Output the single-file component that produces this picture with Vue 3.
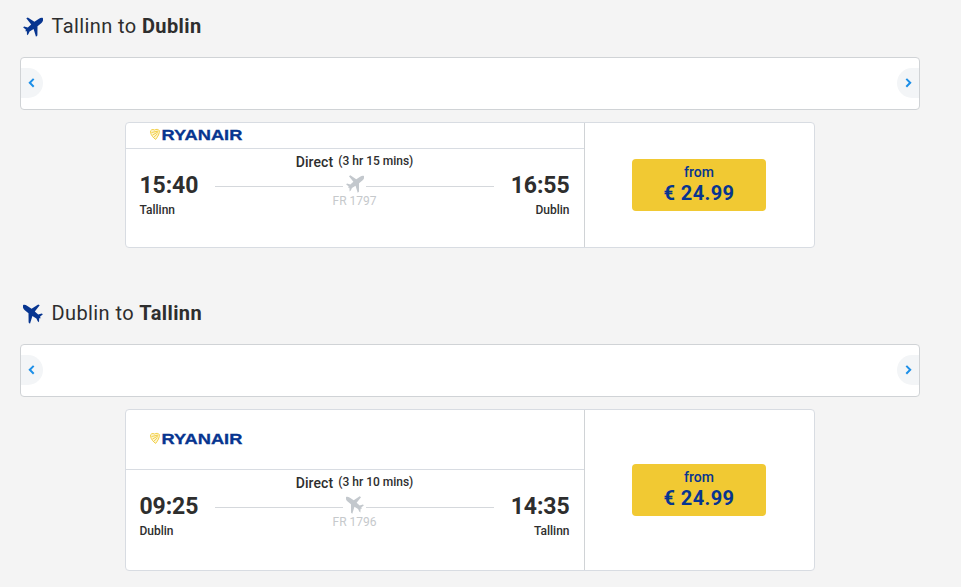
<template>
  <div class="page">
    <section v-for="trip in trips" :key="trip.number" class="trip">
      <h2 class="heading">
        <svg class="heading-plane" :class="{ back: trip.back }" viewBox="0 0 20 20">
          <path :d="plane" />
        </svg>
        <span>{{ trip.from }} to <b>{{ trip.to }}</b></span>
      </h2>

      <div class="dates">
        <button class="arrow prev">
          <svg viewBox="0 0 7 10"><path d="M5.7.9 1.8 4.8l3.9 3.9" /></svg>
        </button>
        <button class="arrow next">
          <svg viewBox="0 0 7 10"><path d="M1.3.9 5.2 4.8 1.3 8.7" /></svg>
        </button>
      </div>

      <div class="card" :class="{ tall: trip.back }">
        <div class="details">
          <div class="airline">
            <svg class="logo" viewBox="0 0 94 14">
              <g class="harp">
                <path d="M1.5 4.2C1.3 1.6 3.500 1 5.500 2c1.600-1 4.200-.8 4.800.6.4 3-1.400 5.800-3.600 8.800C4.300 9.800 2.100 7.400 1.500 4.200Z" />
                <path d="M2.500 4.500 9.300 3M3.500 7l5.400-3M5 9.200l3.500-3.600" />
              </g>
              <text x="12.6" y="12" textLength="80.8" lengthAdjust="spacingAndGlyphs">RYANAIR</text>
            </svg>
          </div>
          <div class="flight">
            <div class="stop">
              <div class="time">{{ trip.departs }}</div>
              <div class="city">{{ trip.from }}</div>
            </div>
            <div class="route">
              <div class="duration"><span class="direct">Direct</span><span class="length">({{ trip.duration }})</span></div>
              <div class="track">
                <i></i>
                <svg :class="{ back: trip.back }" viewBox="0 0 20 20"><path :d="plane" /></svg>
                <i></i>
              </div>
              <div class="number">{{ trip.number }}</div>
            </div>
            <div class="stop arrival">
              <div class="time">{{ trip.arrives }}</div>
              <div class="city">{{ trip.to }}</div>
            </div>
          </div>
        </div>
        <div class="fare">
          <button class="price">
            <span class="price-from">from</span>
            <span class="price-value">{{ trip.price }}</span>
          </button>
        </div>
      </div>
    </section>
  </div>
</template>

<script setup>
import { ref } from 'vue';

const plane = 'M19.9 1.2C19.2.4 17.200.9 15.600 1.900L11.400 4.800 4.800.400 3.300 1.300 8.200 7.500 4.800 10.600 1.200 9.400.100 10.300 3 12.800 2.300 14.300 3.800 14.300 4 18.200 5.300 17.300 6.600 14.400 10.600 12 13 19.700 14.400 18.600 14.500 9.300 18.200 6.200C20 4.700 20.600 2.300 19.900 1.200Z';

const trips = ref([
  {
    from: 'Tallinn',
    to: 'Dublin',
    departs: '15:40',
    arrives: '16:55',
    duration: '3 hr 15 mins',
    number: 'FR 1797',
    price: '€ 24.99',
    back: false,
  },
  {
    from: 'Dublin',
    to: 'Tallinn',
    departs: '09:25',
    arrives: '14:35',
    duration: '3 hr 10 mins',
    number: 'FR 1796',
    price: '€ 24.99',
    back: true,
  },
]);
</script>

<style>
body {
  background: #f4f4f4;
}
</style>

<style scoped>
.page {
  box-sizing: border-box;
  height: 587px;
  overflow: hidden;
  padding: 11px 41px 0 20px;
  background: #f4f4f4;
  color: #2e2e2e;
  font-family: Roboto, sans-serif;
}

.trip {
  margin-bottom: 50px;
}

.heading {
  display: flex;
  align-items: center;
  height: 30px;
  margin: 0 0 16px;
  padding-left: 3px;
  font-size: 20px;
  font-weight: 400;
  letter-spacing: 0.4px;
}

.heading b {
  font-weight: 700;
}

.heading-plane {
  width: 20px;
  height: 20px;
  margin: 2px 8.5px 0 0;
  fill: #073590;
}

.back {
  transform: scaleX(-1);
}

.dates {
  box-sizing: border-box;
  display: flex;
  justify-content: space-between;
  height: 53px;
  padding-top: 10px;
  border: 1px solid #d0d3d6;
  border-radius: 4px;
  background: #fff;
}

.arrow {
  display: flex;
  align-items: center;
  width: 22px;
  height: 30px;
  padding: 0 0 0 7px;
  border: 0;
  background: #f3f5f7;
}

.arrow svg {
  width: 7px;
  height: 10px;
  fill: none;
  stroke: #1c8fe8;
  stroke-width: 2;
}

.prev {
  border-radius: 0 15px 15px 0;
}

.next {
  padding-left: 8px;
  border-radius: 15px 0 0 15px;
}

.card {
  box-sizing: border-box;
  display: flex;
  width: 690px;
  height: 126px;
  margin: 12px 0 0 105px;
  border: 1px solid #d8dce2;
  border-radius: 4px;
  background: #fff;
}

.card.tall {
  height: 162px;
}

.details {
  width: 458px;
  border-right: 1px solid #d0d3d6;
}

.airline {
  box-sizing: border-box;
  display: flex;
  align-items: center;
  height: 26px;
  padding: 0 0 2px 23px;
  border-bottom: 1px solid #d8dce2;
}

.tall .airline {
  height: 60px;
}

.logo {
  width: 94px;
  height: 14px;
}

.logo text {
  fill: #073590;
  stroke: #073590;
  stroke-width: 0.3;
  font: bold 14.5px "Liberation Sans", sans-serif;
}

.harp {
  fill: #fdf6d8;
  stroke: #f1c933;
  stroke-width: 0.9;
}

.flight {
  display: flex;
  justify-content: space-between;
  padding: 0 14px;
}

.stop {
  width: 75px;
  padding-top: 23px;
}

.stop:first-child {
  margin-left: -0.5px;
}

.arrival {
  margin-right: 0.5px;
  text-align: right;
}

.time {
  font-size: 23px;
  font-weight: 700;
  line-height: 28px;
  letter-spacing: -0.1px;
}

.city {
  margin-top: 2px;
  font-size: 12px;
  font-weight: 500;
  line-height: 16px;
}

.route {
  width: 279px;
  padding-top: 4px;
  text-align: center;
}

.duration {
  display: flex;
  justify-content: center;
  height: 19px;
  line-height: 18px;
}

.direct {
  margin-right: 5px;
  font-size: 14px;
  font-weight: 500;
  letter-spacing: 0.1px;
}

.length {
  font-size: 12px;
  font-weight: 500;
  line-height: 16px;
}

.track {
  display: flex;
  align-items: center;
  height: 21px;
}

.track i {
  flex: 1;
  height: 1px;
  margin-top: 7px;
  background: #d5d8dc;
}

.track svg {
  width: 18px;
  height: 18px;
  margin: 3px 2px 0 3px;
  fill: #c3c8cd;
}

.number {
  color: #c6c9cc;
  font-size: 12px;
  line-height: 16px;
}

.fare {
  display: flex;
  align-items: center;
  justify-content: center;
  flex: 1;
  padding-right: 2px;
}

.price {
  display: flex;
  flex-direction: column;
  align-items: center;
  width: 134px;
  height: 52px;
  padding: 4px 0 0 1px;
  border: 0;
  border-radius: 4px;
  background: #f1c933;
  color: #073590;
  font-family: inherit;
  font-weight: 500;
}

.price-from {
  font-size: 14px;
  line-height: 18px;
}

.price-value {
  font-size: 20px;
  font-weight: 700;
  line-height: 24px;
  letter-spacing: 0.4px;
}
</style>
